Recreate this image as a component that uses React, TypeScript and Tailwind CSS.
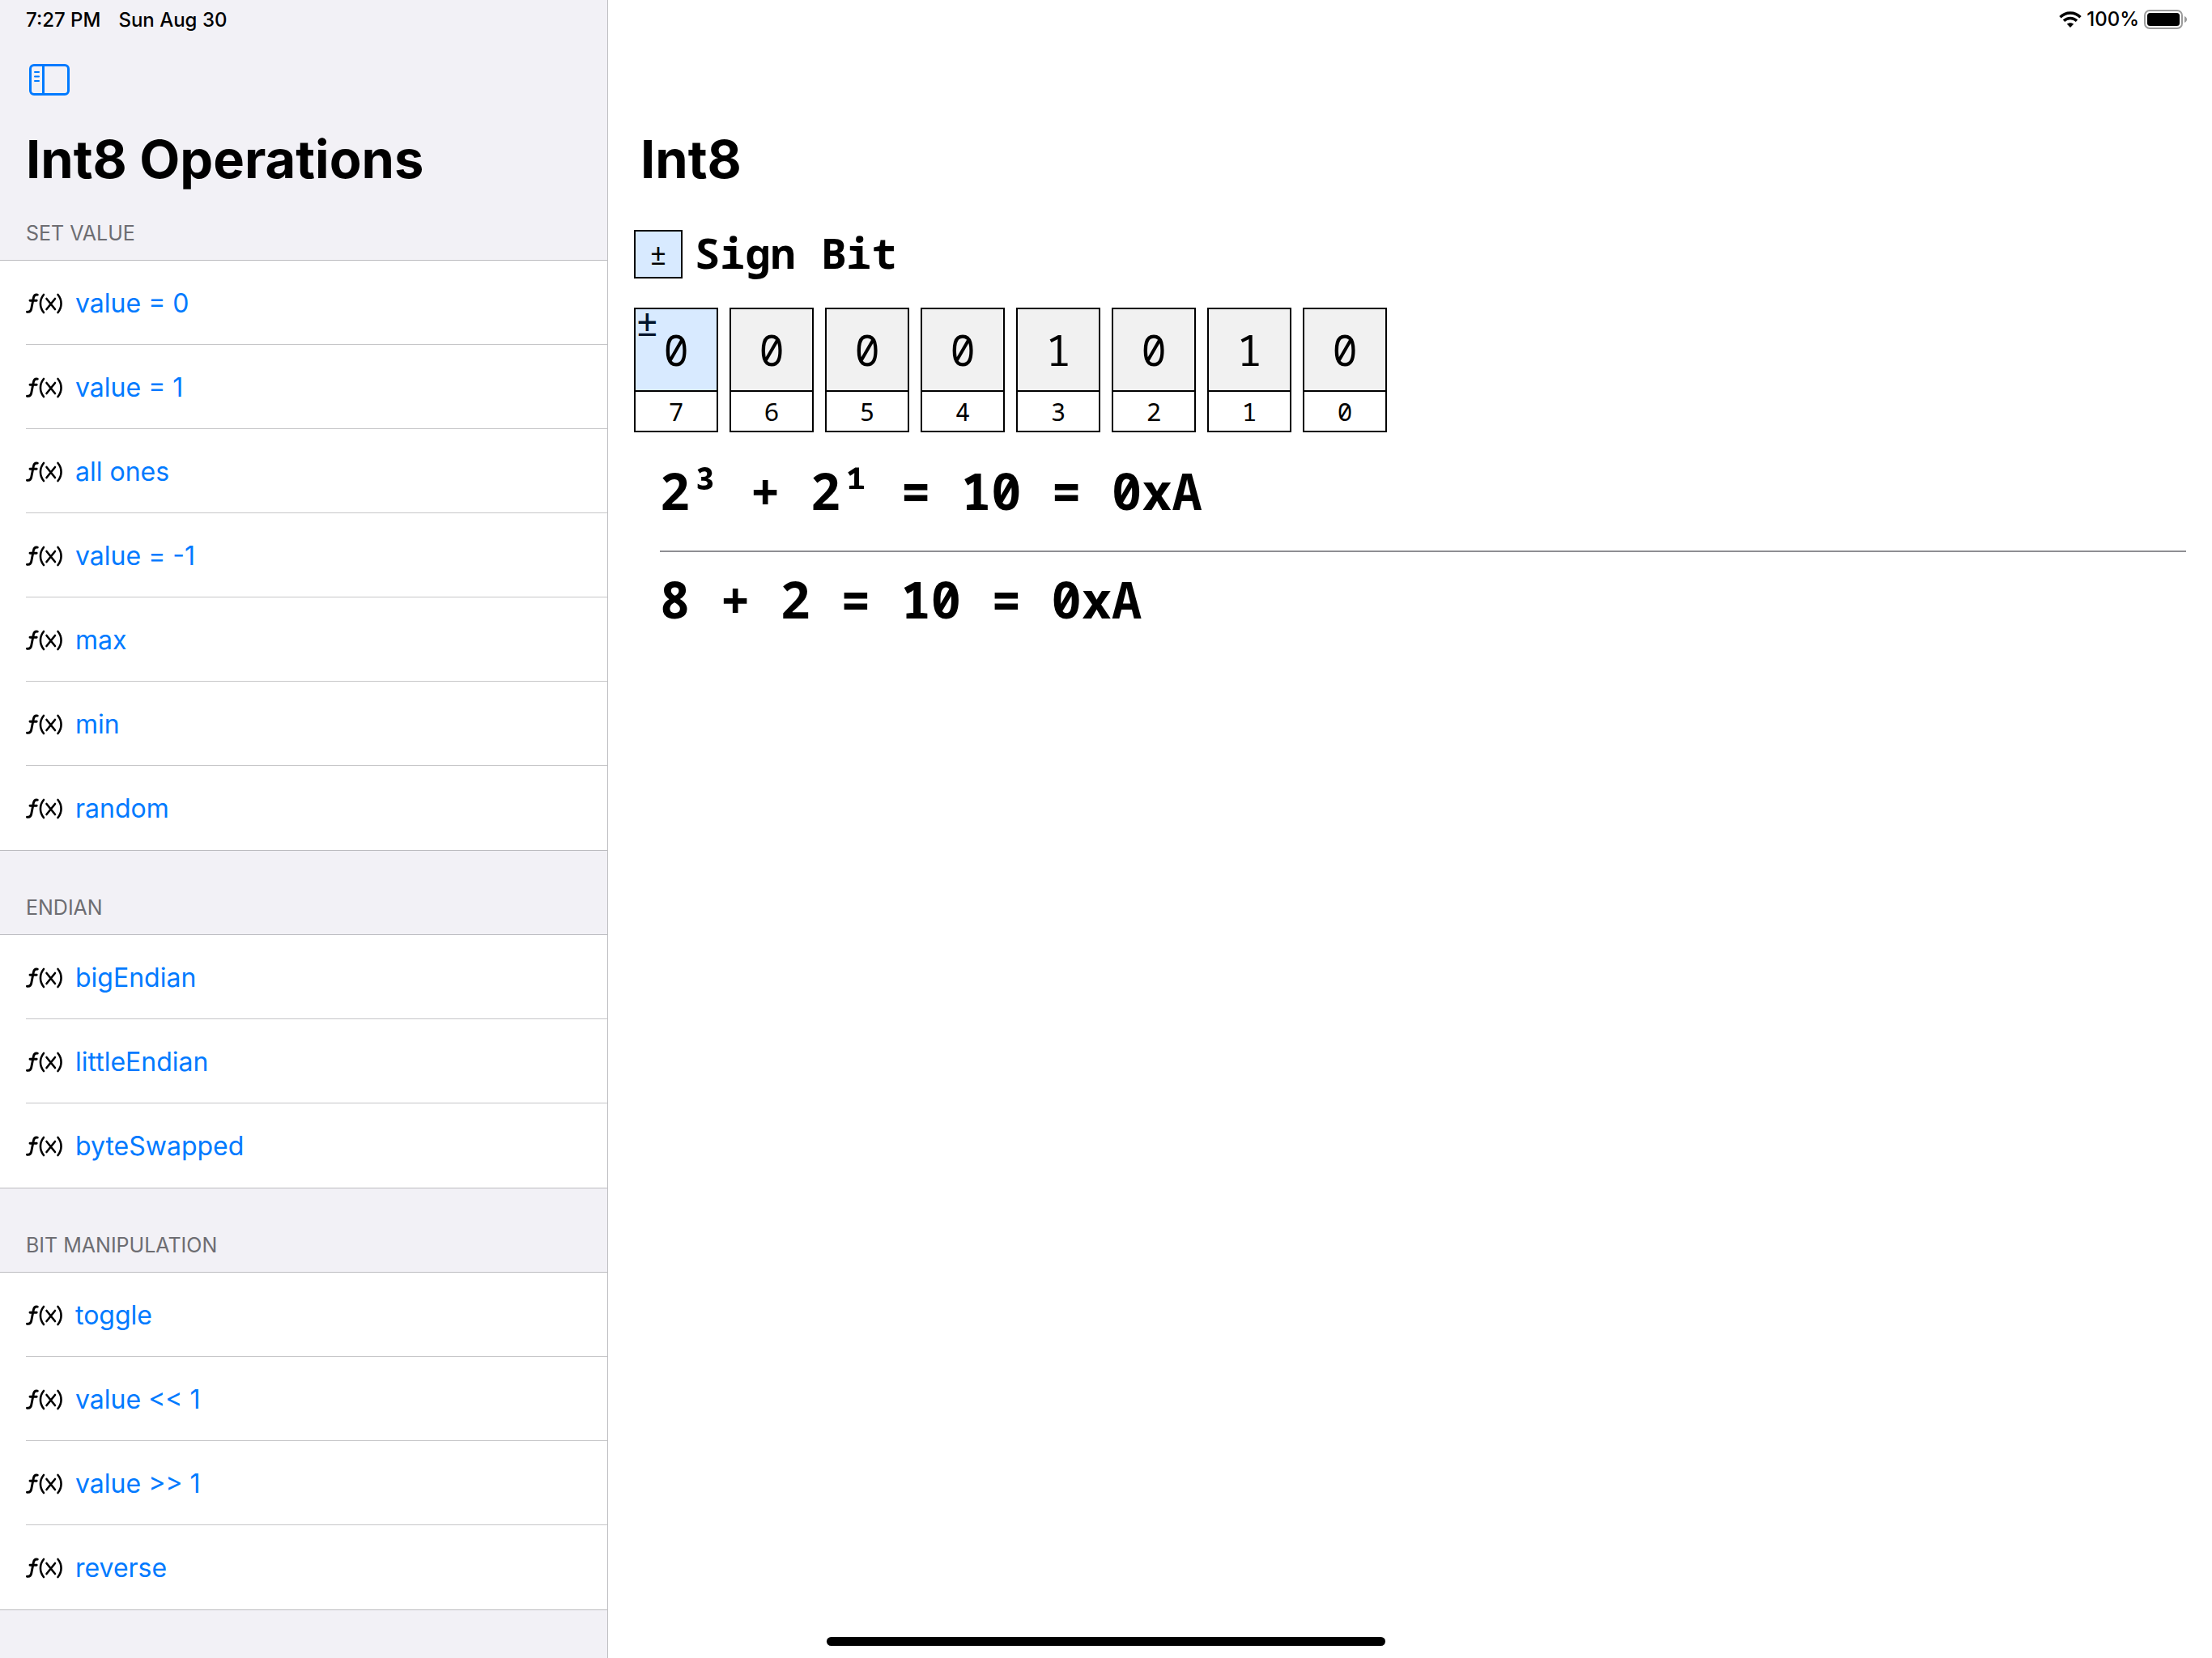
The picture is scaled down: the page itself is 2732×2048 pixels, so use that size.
import React from "react";

type Section = { title: string; items: string[] };

const sections: Section[] = [
  { title: "SET VALUE", items: ["value = 0", "value = 1", "all ones", "value = -1", "max", "min", "random"] },
  { title: "ENDIAN", items: ["bigEndian", "littleEndian", "byteSwapped"] },
  { title: "BIT MANIPULATION", items: ["toggle", "value << 1", "value >> 1", "reverse"] },
];

const bits = [0, 0, 0, 0, 1, 0, 1, 0];

function SidebarIcon() {
  return (
    <svg className="h-10 w-[52px]" viewBox="0 0 52 40" fill="none" stroke="currentColor" strokeLinecap="round" aria-hidden="true">
      <rect x="1.5" y="1.500" width="47" height="36" rx="4.500" strokeWidth="3" />
      <path d="M17.500 2v35" strokeWidth="3" strokeLinecap="butt" />
      <path d="M7 10h5M7 15.500h5M7 21h5" strokeWidth="2" />
    </svg>
  );
}

function FunctionIcon() {
  return (
    <svg className="h-8 w-[46px] shrink-0" viewBox="0 0 46 32" fill="none" stroke="currentColor" strokeWidth="2.6" strokeLinecap="round" strokeLinejoin="round" aria-hidden="true">
      <path d="M1.500 26.300c3 .5 4.600-.7 5.200-3.800l2.600-13.300c.6-3.300 2-4.600 5-4.100M5 12.300h8.200" strokeWidth="2.900" />
      <path d="M22 5c-5.400 6.500-5.400 15.500 0 22M39.500 5c5.400 6.500 5.400 15.500 0 22" />
      <path d="M25.500 10l10.500 13M36 10L25.500 23" />
    </svg>
  );
}

function WifiIcon() {
  return (
    <svg className="h-5 w-7" viewBox="0 0 28 20" fill="none" stroke="currentColor" strokeWidth="3.400" aria-hidden="true">
      <path d="M1.500 7.200c7-6.900 18-6.900 25 0" />
      <path d="M6 11.800c4.500-4.400 11.500-4.400 16 0" />
      <path d="M14 20l-4.100-4.300c2.300-2 5.900-2 8.200 0z" fill="currentColor" stroke="none" />
    </svg>
  );
}

function BatteryIcon() {
  return (
    <svg className="h-6 w-[54px]" viewBox="0 0 54 24" aria-hidden="true">
      <rect x="1" y="1" width="46" height="22" rx="6" fill="none" stroke="#9b9b9b" strokeWidth="2" />
      <rect x="4" y="4" width="40" height="16" rx="3.500" fill="#000" />
      <path d="M50 8c4 1.500 4 6.500 0 8z" fill="#9b9b9b" />
    </svg>
  );
}

function Sidebar() {
  return (
    <aside className="flex w-[751px] shrink-0 flex-col border-r border-[#c0c0c3] bg-[#f2f1f6]">
      <div className="flex h-12 items-center gap-[22px] px-8 pt-0.5 text-[24px] font-medium">
        <span>7:27 PM</span>
        <span>Sun Aug 30</span>
      </div>
      <div className="flex h-[102px] items-center px-9">
        <button type="button" aria-label="Toggle sidebar" className="text-[#007aff]">
          <SidebarIcon />
        </button>
      </div>
      <h1 className="px-8 text-[65px] leading-[94px] font-bold">Int8 Operations</h1>
      {sections.map((section, i) => (
        <section key={section.title}>
          <h2 className={`flex items-end px-8 pb-[18px] text-[25px] leading-[30px] text-[#6d6d72] ${i === 0 ? "h-[77px]" : "h-[103px]"}`}>
            {section.title}
          </h2>
          <ul className="border-y border-[#bcbcc0] bg-white">
            {section.items.map((item, j) => (
              <li key={item} className="pl-8">
                <button
                  type="button"
                  className={`flex h-[104px] w-full items-center gap-[15px] pt-0.5 text-[32px] ${j === section.items.length - 1 ? "" : "border-b border-[#c6c6c8]"}`}
                >
                  <FunctionIcon />
                  <span className="text-[#007aff]">{item}</span>
                </button>
              </li>
            ))}
          </ul>
        </section>
      ))}
    </aside>
  );
}

function BitCell({ value, index }: { value: number; index: number }) {
  const isSign = index === 7;
  return (
    <div className="w-[104px] border-2 border-black text-center">
      <button
        type="button"
        aria-label={`Bit ${index}`}
        className={`relative block h-[102px] w-full border-b-2 border-black text-[52px] ${isSign ? "bg-[#d8eaff]" : "bg-[#f1f1f1]"}`}
      >
        {isSign && <span className="absolute top-0 left-0 text-[48px] leading-[30px] text-[#00142b]">±</span>}
        {value}
      </button>
      <div className="h-12 text-[31px] leading-[48px]">{index}</div>
    </div>
  );
}

function Detail() {
  return (
    <main className="flex min-w-0 flex-1 flex-col">
      <div className="flex h-12 items-center justify-end gap-1.5 pr-[30px] text-[24px] font-medium">
        <WifiIcon />
        <span>100%</span>
        <BatteryIcon />
      </div>
      <h1 className="mt-[102px] px-10 text-[65px] leading-[94px] font-bold">Int8</h1>
      <div className="flex flex-col px-8 pt-10 font-['Noto_Sans_Mono','DejaVu_Sans_Mono',monospace]">
        <div className="flex items-center gap-[15px]">
          <span className="flex size-[60px] items-center justify-center border-2 border-black bg-[#d8eaff] text-[36px]">±</span>
          <span className="pb-1 text-[52px] leading-[56px] font-bold">Sign Bit</span>
        </div>
        <div className="mt-9 flex gap-[14px]">
          {bits.map((value, i) => (
            <BitCell key={i} value={value} index={7 - i} />
          ))}
        </div>
        <div className="mt-[30px] pl-8 text-[62px] leading-[84px] font-bold">
          <p>2³ + 2¹ = 10 = 0xA</p>
          <hr className="mt-8 mb-4 border-t-2 border-[#8e8e93]" />
          <p>8 + 2 = 10 = 0xA</p>
        </div>
      </div>
    </main>
  );
}

export default function App() {
  return (
    <div className="relative flex h-screen overflow-hidden bg-white font-[Inter,sans-serif] text-black">
      <Sidebar />
      <Detail />
      <div className="absolute bottom-[15px] left-1/2 h-[11px] w-[690px] -translate-x-1/2 rounded-full bg-black" />
    </div>
  );
}
